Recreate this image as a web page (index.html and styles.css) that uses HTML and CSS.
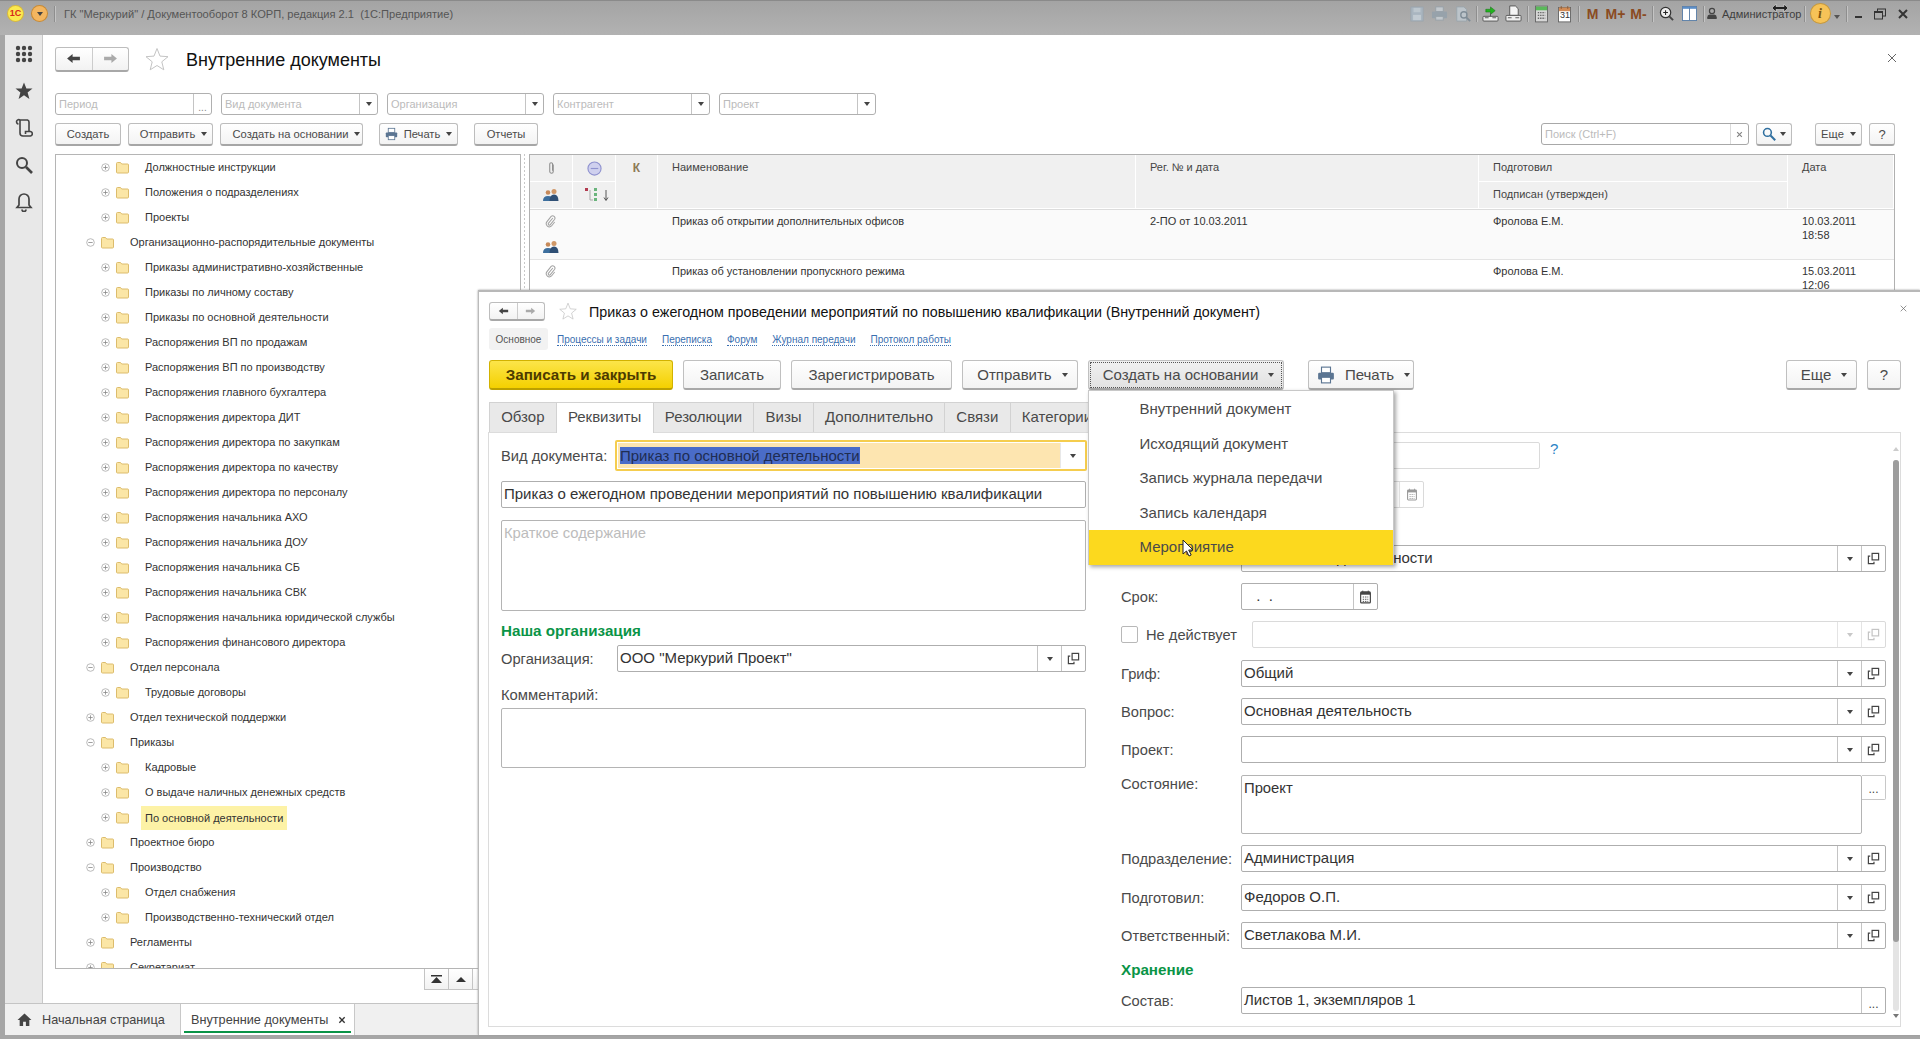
FILE: index.html
```html
<!DOCTYPE html>
<html lang="ru">
<head>
<meta charset="utf-8">
<title>Внутренние документы</title>
<link rel="stylesheet" href="styles.css">
</head>
<body>
<svg class="defs" width="0" height="0">
  <symbol id="arrL" viewBox="0 0 16 12"><path d="M1 6l6-5v3.2h8v3.6H7V11z"/></symbol>
  <symbol id="arrR" viewBox="0 0 16 12"><path d="M15 6L9 1v3.2H1v3.6h8V11z"/></symbol>
  <symbol id="starO" viewBox="0 0 24 24"><path d="M12 1.500l3 7.600 8 .6-6.200 5.100 2 8-6.800-4.300-6.800 4.300 2-8L1 9.700l8-.6z" fill="#fff" stroke="#c4c4c4" stroke-width="1"/></symbol>
  <symbol id="grid" viewBox="0 0 18 18"><g fill="#444"><circle cx="3" cy="3" r="2.200"/><circle cx="9" cy="3" r="2.200"/><circle cx="15" cy="3" r="2.200"/><circle cx="3" cy="9" r="2.200"/><circle cx="9" cy="9" r="2.200"/><circle cx="15" cy="9" r="2.200"/><circle cx="3" cy="15" r="2.200"/><circle cx="9" cy="15" r="2.200"/><circle cx="15" cy="15" r="2.200"/></g></symbol>
  <symbol id="starF" viewBox="0 0 18 18"><path d="M9 .5l2.400 6H17.500l-4.900 4 1.800 6.500L9 13.300 3.600 17l1.800-6.500-4.900-4h6.100z" fill="#444"/></symbol>
  <symbol id="scroll" viewBox="0 0 18 20"><path d="M3.500 6A2.200 2.200 0 1 1 5 2h7.500A2 2 0 0 1 14 4v9.500M5 2.500V15a3 3 0 0 0 3 3h7.500a2.300 2.300 0 0 0 0-4.500H10.500v2.500" fill="none" stroke="#444" stroke-width="1.600"/></symbol>
  <symbol id="search" viewBox="0 0 18 18"><circle cx="7" cy="7" r="5" fill="none" stroke="currentColor" stroke-width="2"/><path d="M11 11l6 6" stroke="currentColor" stroke-width="2.600"/></symbol>
  <symbol id="bell" viewBox="0 0 18 20"><path d="M9 2a5 5 0 0 0-5 5v6l-2 2.500h14L14 13V7a5 5 0 0 0-5-5zM7 17.500a2 2 0 0 0 4 0" fill="none" stroke="#444" stroke-width="1.700"/></symbol>
  <symbol id="folder" viewBox="0 0 13 13"><path d="M.5 2.500q0-1 1-1h3l1.200 1.500h6q.8 0 .8 1v7q0 1-1 1h-10q-1 0-1-1z" fill="#fbe6a6" stroke="#dcbc6c"/></symbol>
  <symbol id="plus" viewBox="0 0 9 9"><circle cx="4.500" cy="4.500" r="3.800" fill="none" stroke="#aaa" stroke-width=".8"/><path d="M2.300 4.500h4.400M4.500 2.300v4.400" stroke="#888" stroke-width=".8"/></symbol>
  <symbol id="minus" viewBox="0 0 9 9"><circle cx="4.500" cy="4.500" r="3.800" fill="none" stroke="#aaa" stroke-width=".8"/><path d="M2.300 4.500h4.400" stroke="#888" stroke-width=".8"/></symbol>
  <symbol id="printer" viewBox="0 0 16 16"><rect x="4" y="1" width="8" height="5" fill="#fff" stroke="#5b7592"/><rect x="1" y="6" width="14" height="6" rx="1" fill="#5b7592"/><rect x="4" y="10" width="8" height="5" fill="#fff" stroke="#5b7592"/></symbol>
  <symbol id="clip" viewBox="0 0 14 16"><path d="M10 3.500L4.500 10a1.500 1.500 0 0 0 2.300 2l5.500-6.800a3 3 0 0 0-4.500-3.800L2.300 8.500a4 4 0 0 0 6 5.200l4-5" fill="none" stroke="#a2a2a2" stroke-width="1.300"/></symbol>
  <symbol id="clipV" viewBox="0 0 10 16"><path d="M7 4v8a2 2 0 0 1-4 0V3.500a1.600 1.600 0 0 1 3.200 0V11" fill="none" stroke="#8e8e8e" stroke-width="1.200"/></symbol>
  <symbol id="people" viewBox="0 0 16 14"><circle cx="5" cy="4.500" r="2.300" fill="#c78a5a"/><path d="M0 13q0-5 5-5t5 5z" fill="#3d6f9e"/><circle cx="11" cy="3.500" r="2.500" fill="#d09868"/><path d="M6.500 13q0-6.500 4.500-6.500t4.500 6.500z" fill="#2f4f75"/></symbol>
  <symbol id="status" viewBox="0 0 16 16"><circle cx="8" cy="8" r="7" fill="#cfd0ee" stroke="#8f92cf" stroke-width="1.200"/><path d="M4 8h8" stroke="#8f92cf" stroke-width="1.200"/></symbol>
  <symbol id="treeico" viewBox="0 0 26 14"><rect x="0" y="0" width="3" height="3" fill="#b23b50"/><rect x="9" y="0" width="3" height="3" fill="#6ab47c"/><rect x="9" y="5" width="3" height="3" fill="#6ab47c"/><rect x="9" y="10" width="3" height="3" fill="#6ab47c"/><path d="M5 2v10h3" fill="none" stroke="#aaa"/><path d="M21 2v10M19 9.500l2 3 2-3" fill="none" stroke="#444" stroke-width=".9"/></symbol>
  <symbol id="copy" viewBox="0 0 14 14"><rect x="5.500" y="1.500" width="7" height="7" fill="none" stroke="currentColor" stroke-width="1.300"/><path d="M3.500 4.500h-2v8h6v-2" fill="none" stroke="currentColor" stroke-width="1.300"/></symbol>
  <symbol id="cal" viewBox="0 0 12 15"><rect x=".7" y="2" width="10.600" height="12" rx="1" fill="#fff" stroke="currentColor" stroke-width="1.300"/><rect x="1" y="2" width="10" height="3" fill="currentColor"/><path d="M3 .5v3M9 .5v3" stroke="currentColor"/><path d="M3 7.500h6M3 10h6M3 12.300h6" stroke="currentColor" stroke-dasharray="1.500 1"/></symbol>
  <symbol id="home" viewBox="0 0 16 14"><path d="M8 .5L.5 7.500h2.300V14h3.700V9.500h3V14h3.700V7.500h2.300z" fill="#444"/></symbol>
  <symbol id="t-save" viewBox="0 0 16 18"><rect x="1" y="1" width="14" height="16" fill="#a9b5bf" stroke="#9aa5ae"/><rect x="4" y="2" width="8" height="5" fill="#bcc6cd"/><rect x="3.500" y="10" width="9" height="6" fill="#c2cbd2"/></symbol>
  <symbol id="t-print" viewBox="0 0 18 18"><rect x="5" y="2" width="8" height="5" fill="#c2c8cd" stroke="#98a1a8"/><rect x="1" y="7" width="16" height="7" rx="1" fill="#97a2ab"/><rect x="5" y="12" width="8" height="4" fill="#c2c8cd" stroke="#98a1a8"/></symbol>
  <symbol id="t-prev" viewBox="0 0 18 18"><path d="M2 1h8l3 3v13H2z" fill="#bcc4ca" stroke="#9aa5ad"/><circle cx="10" cy="10" r="3.500" fill="none" stroke="#7f8c96" stroke-width="1.500"/><path d="M12.500 12.500L17 17" stroke="#7f8c96" stroke-width="2"/></symbol>
  <symbol id="t-in" viewBox="0 0 18 18"><path d="M4 4.500h5V2l5 4-5 4V7.500H4z" fill="#22b21f" stroke="#0e6d12" stroke-width=".5"/><rect x="1" y="12" width="16" height="5" rx="1" fill="#eee" stroke="#555"/><path d="M3 13.500h4M11 13.500h4M9 9v3" stroke="#555"/></symbol>
  <symbol id="t-out" viewBox="0 0 18 18"><path d="M5 1h6l3 3v7H5z" fill="#f4f4f4" stroke="#555"/><rect x="1" y="11" width="16" height="6" rx="1" fill="#eee" stroke="#555"/><path d="M3 13.500h4M11 13.500h4" stroke="#555"/></symbol>
  <symbol id="t-calc" viewBox="0 0 14 18"><rect x=".5" y=".5" width="13" height="17" fill="#d6d6d6" stroke="#666"/><rect x="1" y="1" width="12" height="4" fill="#5ab95a"/><path d="M3 7.500h8M3 10.500h8M3 13.500h8" stroke="#666" stroke-width="1.500" stroke-dasharray="1.500 1"/></symbol>
  <symbol id="t-cal" viewBox="0 0 14 18"><rect x=".5" y="2" width="13" height="15.500" fill="#fff" stroke="#666"/><rect x="1" y="2" width="12" height="4" fill="#d28b55"/><path d="M3.500 .5v3M10.500 .5v3" stroke="#8a5a35"/></symbol>
  <symbol id="t-zoom" viewBox="0 0 16 16"><circle cx="7" cy="7" r="5.500" fill="#eee" stroke="#333" stroke-width="1.300"/><path d="M4.500 7h5M7 4.500v5" stroke="#222" stroke-width="1.100"/><path d="M11 11l4 4" stroke="#444" stroke-width="2"/></symbol>
  <symbol id="t-panel" viewBox="0 0 16 16"><rect x=".5" y=".5" width="15" height="15" fill="#fff" stroke="#5b7fa8"/><rect x="1" y="1" width="14" height="2" fill="#5b8fca"/><path d="M8 2v13" stroke="#5b7fa8"/></symbol>
  <symbol id="t-user" viewBox="0 0 14 14"><circle cx="7" cy="4" r="3" fill="none" stroke="#444" stroke-width="1.400"/><path d="M1.500 13.300v-2q0-2.800 3-3h5q3 .2 3 3v2z" fill="#444"/></symbol>
  <symbol id="t-close" viewBox="0 0 12 12"><path d="M2 2l8 8M10 2l-8 8" stroke="#333" stroke-width="2"/></symbol>
  <symbol id="t-rest" viewBox="0 0 12 12"><rect x="3.500" y="1" width="8" height="7" fill="none" stroke="#333"/><rect x=".5" y="3.500" width="8" height="7.500" fill="#aaa" stroke="#333"/><rect x=".5" y="3.500" width="8" height="1.500" fill="#333"/></symbol>
  <symbol id="x" viewBox="0 0 10 10"><path d="M1 1l8 8M9 1l-8 8" stroke="#666" stroke-width="1"/></symbol>
</svg>

<div class="app">
  <header class="titlebar">
    <div class="tb-left">
      <span class="logo">1С</span>
      <span class="menu-ball"><i class="caret dark"></i></span>
      <span class="tb-sep"></span>
      <span class="tb-title">ГК "Меркурий" / Документооборот 8 КОРП, редакция 2.1&nbsp; (1С:Предприятие)</span>
    </div>
    <div class="tb-right">
      <span class="ti"><svg width="14" height="16"><use href="#t-save"/></svg></span>
      <span class="ti"><svg width="17" height="17"><use href="#t-print"/></svg></span>
      <span class="ti"><svg width="16" height="16"><use href="#t-prev"/></svg></span>
      <span class="tb-sep"></span>
      <span class="ti"><svg width="17" height="17"><use href="#t-in"/></svg></span>
      <span class="ti"><svg width="17" height="17"><use href="#t-out"/></svg></span>
      <span class="tb-sep"></span>
      <span class="ti"><svg width="13" height="18"><use href="#t-calc"/></svg></span>
      <span class="ti cal31"><svg width="13" height="18"><use href="#t-cal"/></svg><b>31</b></span>
      <span class="tb-sep"></span>
      <span class="ti mem">M</span>
      <span class="ti mem">M+</span>
      <span class="ti mem">M-</span>
      <span class="tb-sep"></span>
      <span class="ti"><svg width="15" height="15"><use href="#t-zoom"/></svg></span>
      <span class="ti"><svg width="15" height="15"><use href="#t-panel"/></svg></span>
      <span class="tb-sep"></span>
      <span class="ti-user"><svg width="12" height="13"><use href="#t-user"/></svg><span>Администратор</span></span>
      <span class="tb-sep"></span>
      <span class="ti info">i</span>
      <span class="ti-chev"><i class="caret"></i></span>
      <span class="tb-sep"></span>
      <span class="ti tmin"><i class="min"></i></span>
      <span class="ti"><svg width="12" height="12"><use href="#t-rest"/></svg></span>
      <span class="ti"><svg width="12" height="12"><use href="#t-close"/></svg></span>
    </div>
  </header>

  <div class="workspace">
    <div class="ws-main">
      <nav class="sidebar">
        <span class="si"><svg width="18" height="18"><use href="#grid"/></svg></span>
        <span class="si"><svg width="18" height="18"><use href="#starF"/></svg></span>
        <span class="si"><svg width="18" height="20"><use href="#scroll"/></svg></span>
        <span class="si srch"><svg width="18" height="18"><use href="#search"/></svg></span>
        <span class="si"><svg width="18" height="20"><use href="#bell"/></svg></span>
      </nav>

      <main class="content">
        <div class="page-head">
          <div class="nav"><span class="nav-b"><svg width="15" height="11"><use href="#arrL"/></svg></span><span class="nav-b off"><svg width="15" height="11"><use href="#arrR"/></svg></span></div>
          <svg class="fav" width="24" height="24"><use href="#starO"/></svg>
          <h1 class="page-title">Внутренние документы</h1>
          <span class="page-x"><svg width="10" height="10"><use href="#x"/></svg></span>
        </div>

        <div class="filters">
          <div class="ff"><span class="ff-v">Период</span><span class="ff-b dots">...</span></div>
          <div class="ff"><span class="ff-v">Вид документа</span><span class="ff-b"><i class="caret dark"></i></span></div>
          <div class="ff"><span class="ff-v">Организация</span><span class="ff-b"><i class="caret dark"></i></span></div>
          <div class="ff"><span class="ff-v">Контрагент</span><span class="ff-b"><i class="caret dark"></i></span></div>
          <div class="ff"><span class="ff-v">Проект</span><span class="ff-b"><i class="caret dark"></i></span></div>
        </div>

        <div class="toolbar">
          <button class="btn w66">Создать</button>
          <button class="btn w85 shift">Отправить<i class="caret dark"></i></button>
          <button class="btn w143 shift2">Создать на основании<i class="caret dark"></i></button>
          <button class="btn w79 ml9"><svg width="13" height="14"><use href="#printer"/></svg>Печать<i class="caret dark"></i></button>
          <button class="btn w64 ml9">Отчеты</button>
          <div class="searchbox"><span class="sb-v">Поиск (Ctrl+F)</span><span class="sb-x"><svg width="7" height="7"><use href="#t-close"/></svg></span></div>
          <button class="btn w36 srchb"><svg width="14" height="14"><use href="#search"/></svg><i class="caret dark"></i></button>
          <button class="btn w47 ml23">Еще<i class="caret dark"></i></button>
          <button class="btn w26">?</button>
        </div>

        <div class="split">
          <div class="tree-col">
            <div class="tree">
              <div class="tr l2"><svg width="9" height="9"><use href="#plus"/></svg><svg width="13" height="13"><use href="#folder"/></svg><span>Должностные инструкции</span></div>
              <div class="tr l2"><svg width="9" height="9"><use href="#plus"/></svg><svg width="13" height="13"><use href="#folder"/></svg><span>Положения о подразделениях</span></div>
              <div class="tr l2"><svg width="9" height="9"><use href="#plus"/></svg><svg width="13" height="13"><use href="#folder"/></svg><span>Проекты</span></div>
              <div class="tr l1"><svg width="9" height="9"><use href="#minus"/></svg><svg width="13" height="13"><use href="#folder"/></svg><span>Организационно-распорядительные документы</span></div>
              <div class="tr l2"><svg width="9" height="9"><use href="#plus"/></svg><svg width="13" height="13"><use href="#folder"/></svg><span>Приказы административно-хозяйственные</span></div>
              <div class="tr l2"><svg width="9" height="9"><use href="#plus"/></svg><svg width="13" height="13"><use href="#folder"/></svg><span>Приказы по личному составу</span></div>
              <div class="tr l2"><svg width="9" height="9"><use href="#plus"/></svg><svg width="13" height="13"><use href="#folder"/></svg><span>Приказы по основной деятельности</span></div>
              <div class="tr l2"><svg width="9" height="9"><use href="#plus"/></svg><svg width="13" height="13"><use href="#folder"/></svg><span>Распоряжения ВП по продажам</span></div>
              <div class="tr l2"><svg width="9" height="9"><use href="#plus"/></svg><svg width="13" height="13"><use href="#folder"/></svg><span>Распоряжения ВП по производству</span></div>
              <div class="tr l2"><svg width="9" height="9"><use href="#plus"/></svg><svg width="13" height="13"><use href="#folder"/></svg><span>Распоряжения главного бухгалтера</span></div>
              <div class="tr l2"><svg width="9" height="9"><use href="#plus"/></svg><svg width="13" height="13"><use href="#folder"/></svg><span>Распоряжения директора ДИТ</span></div>
              <div class="tr l2"><svg width="9" height="9"><use href="#plus"/></svg><svg width="13" height="13"><use href="#folder"/></svg><span>Распоряжения директора по закупкам</span></div>
              <div class="tr l2"><svg width="9" height="9"><use href="#plus"/></svg><svg width="13" height="13"><use href="#folder"/></svg><span>Распоряжения директора по качеству</span></div>
              <div class="tr l2"><svg width="9" height="9"><use href="#plus"/></svg><svg width="13" height="13"><use href="#folder"/></svg><span>Распоряжения директора по персоналу</span></div>
              <div class="tr l2"><svg width="9" height="9"><use href="#plus"/></svg><svg width="13" height="13"><use href="#folder"/></svg><span>Распоряжения начальника АХО</span></div>
              <div class="tr l2"><svg width="9" height="9"><use href="#plus"/></svg><svg width="13" height="13"><use href="#folder"/></svg><span>Распоряжения начальника ДОУ</span></div>
              <div class="tr l2"><svg width="9" height="9"><use href="#plus"/></svg><svg width="13" height="13"><use href="#folder"/></svg><span>Распоряжения начальника СБ</span></div>
              <div class="tr l2"><svg width="9" height="9"><use href="#plus"/></svg><svg width="13" height="13"><use href="#folder"/></svg><span>Распоряжения начальника СВК</span></div>
              <div class="tr l2"><svg width="9" height="9"><use href="#plus"/></svg><svg width="13" height="13"><use href="#folder"/></svg><span>Распоряжения начальника юридической службы</span></div>
              <div class="tr l2"><svg width="9" height="9"><use href="#plus"/></svg><svg width="13" height="13"><use href="#folder"/></svg><span>Распоряжения финансового директора</span></div>
              <div class="tr l1"><svg width="9" height="9"><use href="#minus"/></svg><svg width="13" height="13"><use href="#folder"/></svg><span>Отдел персонала</span></div>
              <div class="tr l2"><svg width="9" height="9"><use href="#plus"/></svg><svg width="13" height="13"><use href="#folder"/></svg><span>Трудовые договоры</span></div>
              <div class="tr l1"><svg width="9" height="9"><use href="#plus"/></svg><svg width="13" height="13"><use href="#folder"/></svg><span>Отдел технической поддержки</span></div>
              <div class="tr l1"><svg width="9" height="9"><use href="#minus"/></svg><svg width="13" height="13"><use href="#folder"/></svg><span>Приказы</span></div>
              <div class="tr l2"><svg width="9" height="9"><use href="#plus"/></svg><svg width="13" height="13"><use href="#folder"/></svg><span>Кадровые</span></div>
              <div class="tr l2"><svg width="9" height="9"><use href="#plus"/></svg><svg width="13" height="13"><use href="#folder"/></svg><span>О выдаче наличных денежных средств</span></div>
              <div class="tr l2 sel"><svg width="9" height="9"><use href="#plus"/></svg><svg width="13" height="13"><use href="#folder"/></svg><span>По основной деятельности</span></div>
              <div class="tr l1"><svg width="9" height="9"><use href="#plus"/></svg><svg width="13" height="13"><use href="#folder"/></svg><span>Проектное бюро</span></div>
              <div class="tr l1"><svg width="9" height="9"><use href="#minus"/></svg><svg width="13" height="13"><use href="#folder"/></svg><span>Производство</span></div>
              <div class="tr l2"><svg width="9" height="9"><use href="#plus"/></svg><svg width="13" height="13"><use href="#folder"/></svg><span>Отдел снабжения</span></div>
              <div class="tr l2"><svg width="9" height="9"><use href="#plus"/></svg><svg width="13" height="13"><use href="#folder"/></svg><span>Производственно-технический отдел</span></div>
              <div class="tr l1"><svg width="9" height="9"><use href="#plus"/></svg><svg width="13" height="13"><use href="#folder"/></svg><span>Регламенты</span></div>
              <div class="tr l1"><svg width="9" height="9"><use href="#plus"/></svg><svg width="13" height="13"><use href="#folder"/></svg><span>Секретариат</span></div>
            </div>
            <div class="tree-scroll">
              <span class="ts"><svg width="11" height="8" viewBox="0 0 11 8"><path d="M0 0h11v1.500H0zM5.500 2L11 8H0z" fill="#333"/></svg></span><span class="ts"><i class="up"></i></span><span class="ts"></span><span class="ts"></span>
            </div>
          </div>
          <div class="splitter"></div>
          <div class="table">
            <div class="thead">
              <div class="th c"><svg width="9" height="14"><use href="#clipV"/></svg></div>
              <div class="th c"><svg width="15" height="15"><use href="#status"/></svg></div>
              <div class="th c rs k">К</div>
              <div class="th rs">Наименование</div>
              <div class="th rs reg">Рег. № и дата</div>
              <div class="th">Подготовил</div>
              <div class="th rs">Дата</div>
              <div class="th c"><svg width="16" height="14"><use href="#people"/></svg></div>
              <div class="th c"><svg class="tree-ico" width="26" height="14"><use href="#treeico"/></svg></div>
              <div class="th">Подписан (утвержден)</div>
            </div>
            <div class="trow alt">
              <div class="td ico"><svg width="11" height="13"><use href="#clip"/></svg><svg class="ppl" width="16" height="14"><use href="#people"/></svg></div>
              <div class="td"></div><div class="td"></div>
              <div class="td">Приказ об открытии дополнительных офисов</div>
              <div class="td reg">2-ПО от 10.03.2011</div>
              <div class="td">Фролова Е.М.</div>
              <div class="td">10.03.2011<br>18:58</div>
            </div>
            <div class="trow">
              <div class="td ico"><svg width="11" height="13"><use href="#clip"/></svg></div>
              <div class="td"></div><div class="td"></div>
              <div class="td">Приказ об установлении пропускного режима</div>
              <div class="td reg"></div>
              <div class="td">Фролова Е.М.</div>
              <div class="td">15.03.2011<br>12:06</div>
            </div>
          </div>
        </div>
      </main>
    </div>
    <footer class="tabbar">
      <div class="wtab home"><svg width="15" height="13"><use href="#home"/></svg>Начальная страница</div>
      <div class="wtab cur">Внутренние документы<svg class="wtab-x" width="8" height="8"><use href="#t-close"/></svg></div>
    </footer>
  </div>
</div>

<section class="dialog">
  <div class="d-head">
    <div class="nav sm"><span class="nav-b"><svg width="11" height="8"><use href="#arrL"/></svg></span><span class="nav-b off"><svg width="11" height="8"><use href="#arrR"/></svg></span></div>
    <svg class="fav" width="18" height="18"><use href="#starO"/></svg>
    <h2 class="d-title">Приказ о ежегодном проведении мероприятий по повышению квалификации (Внутренний документ)</h2>
    <span class="d-x"><svg width="7" height="7"><use href="#x"/></svg></span>
  </div>
  <div class="d-links">
    <span class="lnk-cur">Основное</span>
    <a class="lnk">Процессы и задачи</a>
    <a class="lnk">Переписка</a>
    <a class="lnk">Форум</a>
    <a class="lnk">Журнал передачи</a>
    <a class="lnk">Протокол работы</a>
  </div>
  <div class="d-cmd">
    <button class="lbtn primary">Записать и закрыть</button>
    <button class="lbtn w98">Записать</button>
    <button class="lbtn w161">Зарегистрировать</button>
    <button class="lbtn w116 wide">Отправить<i class="caret dark"></i></button>
    <button class="lbtn w196 focus wide">Создать на основании<i class="caret dark"></i></button>
    <button class="lbtn w106 ml14 wide"><svg width="18" height="18"><use href="#printer"/></svg>Печать<i class="caret dark"></i></button>
    <button class="lbtn w71 push wide">Еще<i class="caret dark"></i></button>
    <button class="lbtn w34">?</button>
  </div>
  <div class="d-tabs">
    <span class="dt">Обзор</span><span class="dt on">Реквизиты</span><span class="dt">Резолюции</span><span class="dt">Визы</span><span class="dt">Дополнительно</span><span class="dt">Связи</span><span class="dt">Категории</span>
  </div>
  <div class="d-panel">
    <div class="col-l">
      <div class="row r31">
        <span class="lab w114">Вид документа:</span>
        <div class="fld active"><span class="val"><span class="hl">Приказ по основной деятельности</span></span><span class="fb"><i class="caret dark"></i></span></div>
      </div>
      <div class="fld mt10 w585"><span class="val">Приказ о ежегодном проведении мероприятий по повышению квалификации</span></div>
      <div class="area mt12 w585 h91"><span class="ph">Краткое содержание</span></div>
      <div class="sect mt10">Наша организация</div>
      <div class="row mt4 w585">
        <span class="lab w116">Организация:</span>
        <div class="fld"><span class="val">ООО "Меркурий Проект"</span><span class="fb"><i class="caret dark"></i></span><span class="fb"><svg width="13" height="13"><use href="#copy"/></svg></span></div>
      </div>
      <div class="lab-block mt14">Комментарий:</div>
      <div class="area mt2 w585 h60"></div>
    </div>

    <div class="col-r">
      <div class="row first">
        <span class="lab w120"></span>
        <div class="fld w299 soft"><span class="val"></span></div>
        <span class="q">?</span>
      </div>
      <div class="row mt12">
        <span class="lab w120"></span>
        <div class="fld w183 soft"><span class="val"></span><span class="fb"><svg class="dim" width="10" height="13"><use href="#cal"/></svg></span></div>
      </div>
      <div class="row mt37">
        <span class="lab w120"></span>
        <div class="fld"><span class="val">По основной деятельности</span><span class="fb"><i class="caret dark"></i></span><span class="fb"><svg width="13" height="13"><use href="#copy"/></svg></span></div>
      </div>
      <div class="row mt11">
        <span class="lab w120">Срок:</span>
        <div class="fld w137"><span class="val dots-date">&nbsp;.&nbsp;&nbsp;.</span><span class="fb"><svg width="11" height="14"><use href="#cal"/></svg></span></div>
      </div>
      <div class="row mt11">
        <label class="chk"><i class="box"></i>Не действует</label>
        <div class="fld soft"><span class="val"></span><span class="fb"><i class="caret pale"></i></span><span class="fb pale-ico"><svg width="13" height="13"><use href="#copy"/></svg></span></div>
      </div>
      <div class="row mt12">
        <span class="lab w120">Гриф:</span>
        <div class="fld"><span class="val">Общий</span><span class="fb"><i class="caret dark"></i></span><span class="fb"><svg width="13" height="13"><use href="#copy"/></svg></span></div>
      </div>
      <div class="row mt11">
        <span class="lab w120">Вопрос:</span>
        <div class="fld"><span class="val">Основная деятельность</span><span class="fb"><i class="caret dark"></i></span><span class="fb"><svg width="13" height="13"><use href="#copy"/></svg></span></div>
      </div>
      <div class="row mt11">
        <span class="lab w120">Проект:</span>
        <div class="fld"><span class="val"></span><span class="fb"><i class="caret dark"></i></span><span class="fb"><svg width="13" height="13"><use href="#copy"/></svg></span></div>
      </div>
      <div class="row top mt12">
        <span class="lab w120">Состояние:</span>
        <div class="area grow h59"><span class="val-a">Проект</span></div>
        <span class="more">...</span>
      </div>
      <div class="row mt11">
        <span class="lab w120">Подразделение:</span>
        <div class="fld"><span class="val">Администрация</span><span class="fb"><i class="caret dark"></i></span><span class="fb"><svg width="13" height="13"><use href="#copy"/></svg></span></div>
      </div>
      <div class="row mt12">
        <span class="lab w120">Подготовил:</span>
        <div class="fld"><span class="val">Федоров О.П.</span><span class="fb"><i class="caret dark"></i></span><span class="fb"><svg width="13" height="13"><use href="#copy"/></svg></span></div>
      </div>
      <div class="row mt11">
        <span class="lab w120">Ответственный:</span>
        <div class="fld"><span class="val">Светлакова М.И.</span><span class="fb"><i class="caret dark"></i></span><span class="fb"><svg width="13" height="13"><use href="#copy"/></svg></span></div>
      </div>
      <div class="sect mt11">Хранение</div>
      <div class="row mt7">
        <span class="lab w120">Состав:</span>
        <div class="fld"><span class="val">Листов 1, экземпляров 1</span><span class="fb dots">...</span></div>
      </div>
    </div>

    <div class="vscroll"><i class="vs-up"></i><div class="vs-track"><div class="vs-thumb"></div></div><i class="vs-dn"></i></div>
  </div>
</section>

<div class="popup">
  <div class="pi">Внутренний документ</div>
  <div class="pi">Исходящий документ</div>
  <div class="pi">Запись журнала передачи</div>
  <div class="pi">Запись календаря</div>
  <div class="pi cur">Мероприятие</div>
</div>

<svg class="pointer" width="12" height="18" viewBox="0 0 12 18"><path d="M1 1v14l3.500-3 2.500 5 2.200-1-2.500-5H11z" fill="#fff" stroke="#222"/></svg>
<svg class="resize" width="18" height="10" viewBox="0 0 18 10"><path d="M1 5l4-4v2.500h8V1l4 4-4 4V6.500H5V9z" fill="#222" stroke="#ddd" stroke-width=".6"/></svg>
</body>
</html>
```

FILE: styles.css
```css
* { box-sizing: border-box; }
html, body { margin: 0; height: 100%; }
body { position: relative; width: 1920px; height: 1039px; overflow: hidden; font-family: "Liberation Sans", Arial, sans-serif; color: #333; background: #a6a6a6; }
.defs { position: absolute; }
svg { display: block; flex: none; }
i { display: block; font-style: normal; }
h1, h2 { margin: 0; font-weight: 400; }
button { font-family: inherit; color: #4a4a4a; }

.app { display: flex; flex-direction: column; height: 1039px; }

/* title bar */
.titlebar { height: 35px; flex: none; display: flex; justify-content: space-between; background: linear-gradient(#a4a4a4, #b2b2b2); border-top: 1px solid #8a8a8a; }
.tb-left { display: flex; align-items: center; padding: 0 0 9px 8px; }
.logo { width: 15px; height: 15px; border-radius: 50%; margin-right: 9px; background: #fbe94f; color: #d62a1c; font-size: 9px; font-weight: 700; line-height: 15px; text-align: center; box-shadow: 0 0 0 1px #d8b93b; }
.menu-ball { width: 15px; height: 15px; border-radius: 50%; background: #f3b660; box-shadow: 0 0 0 1px #c98a32; display: flex; align-items: center; justify-content: center; }
.tb-sep { width: 1px; height: 16px; background: #8e8e8e; margin: 0 2px; box-shadow: 1px 0 0 #c4c4c4; }
.tb-left .tb-sep { margin: 0 9px 0 7px; }
.tb-title { font-size: 11.100px; color: #555; }
.tb-right { display: flex; align-items: center; padding: 0 5.500px 9px 0; }
.ti { width: 23px; height: 20px; display: flex; align-items: center; justify-content: center; position: relative; }
.ti.tmin { width: 20px; }
.mem { font-size: 14px; font-weight: 700; color: #8a4b22; }
.cal31 b { position: absolute; left: 7px; top: 6px; font-size: 9px; font-weight: 400; color: #333; }
.ti-user { display: flex; align-items: center; gap: 4px; font-size: 11px; color: #3f3f3f; width: 95.500px; white-space: nowrap; }
.info { width: 19px; height: 19px; margin-left: 4px; border-radius: 50%; background: #f6c358; color: #7a5410; font: italic 700 14px "Liberation Serif", serif; box-shadow: 0 0 0 1px #c79a3e; }
.ti-chev { width: 14px; display: flex; justify-content: center; padding-top: 6px; }
.min { width: 7px; height: 2px; background: #333; margin-top: 6px; }

.caret { width: 0; height: 0; border-left: 3px solid transparent; border-right: 3px solid transparent; border-top: 4px solid #555; display: inline-block; }
.caret.dark { border-top-color: #444; }
.caret.pale { border-top-color: #c8c8c8; }

/* workspace */
.workspace { flex: 1; min-height: 0; margin: 0 0 4px 5px; display: flex; flex-direction: column; }
.ws-main { flex: 1; min-height: 0; display: flex; }
.sidebar { width: 38px; flex: none; background: #e8e8e8; border-right: 1px solid #c8c8c8; display: flex; flex-direction: column; }
.si { height: 37px; flex: none; display: flex; align-items: center; justify-content: center; }
.srch { color: #444; }
.content { flex: 1; min-width: 0; background: #fff; padding: 12px 25px 0 12px; display: flex; flex-direction: column; }

.page-head { height: 24px; flex: none; display: flex; align-items: center; position: relative; }
.nav { display: flex; width: 74px; height: 25px; border: 1px solid #bdbdbd; border-bottom: 2px solid #a8a8a8; border-radius: 3px; background: linear-gradient(#fff, #f2f2f2); }
.nav-b { flex: 1; display: flex; align-items: center; justify-content: center; color: #444; fill: #444; }
.nav-b + .nav-b { border-left: 1px solid #ccc; }
.nav-b.off { fill: #aaa; }
.fav { margin-left: 16px; }
.page-title { margin: 2px 0 0 17px; font-size: 18px; color: #111; }
.page-x { position: absolute; right: -2px; top: 6px; }

.filters { display: flex; gap: 9px; margin-top: 22px; height: 22px; flex: none; }
.ff { width: 157px; display: flex; border: 1px solid #b0b0b0; border-radius: 3px; background: #fff; }
.ff-v { flex: 1; padding-left: 3px; font-size: 11px; line-height: 20px; color: #bbb; }
.ff-b { width: 18px; border-left: 1px solid #c4c4c4; display: flex; align-items: center; justify-content: center; }
.ff-b.dots { font-size: 10px; color: #888; padding-top: 6px; }

.toolbar { display: flex; gap: 7px; margin-top: 8px; height: 23px; flex: none; align-items: stretch; }
.btn { height: 23px; padding: 0; font-size: 11.200px; border: 1px solid #bdbdbd; border-bottom: 2px solid #a6a6a6; border-radius: 3px; background: linear-gradient(#fff, #f3f3f3); display: flex; align-items: center; justify-content: center; gap: 6px; }
.btn.shift { padding-left: 6px; }
.btn.shift2 { padding-left: 9px; gap: 5px; }
.w66 { width: 66px; } .w85 { width: 85px; } .w143 { width: 143px; } .w79 { width: 79px; } .w64 { width: 64px; } .w36 { width: 36px; } .w47 { width: 47px; } .w26 { width: 26px; font-size: 13px; }
.ml9 { margin-left: 9px; }
.ml23 { margin-left: 16px; }
.searchbox { margin-left: auto; width: 208px; height: 22px; display: flex; border: 1px solid #a8a8a8; border-radius: 3px; }
.sb-v { flex: 1; padding-left: 3px; font-size: 11px; line-height: 20px; color: #bbb; }
.sb-x { width: 18px; border-left: 1px solid #c4c4c4; display: flex; align-items: center; justify-content: center; opacity: .6; }
.srchb { color: #2f6f9f; gap: 4px; }

.split { flex: 1; min-height: 0; display: flex; margin-top: 8px; }
.tree-col { width: 466px; flex: none; display: flex; flex-direction: column; }
.tree { height: 815px; flex: none; overflow: hidden; border: 1px solid #b5b5b5; background: #fff; }
.tr { height: 25px; display: flex; align-items: center; font-size: 11px; color: #333; white-space: nowrap; }
.tr.l1 { padding-left: 30px; }
.tr.l2 { padding-left: 45px; }
.tr svg + svg { margin-left: 6px; }
.tr span { margin: -1px 0 0 16px; }
.tr.sel span { margin: 0 0 0 12px; padding: 0 4px; line-height: 24px; background: #fdf2a6; }
.tree-scroll { display: flex; justify-content: flex-end; height: 21px; flex: none; }
.ts { width: 25px; border: 1px solid #c4c4c4; border-top: 0; margin-left: -1px; display: flex; align-items: center; justify-content: center; background: linear-gradient(#fff, #f2f2f2); }
.up { border-left: 5px solid transparent; border-right: 5px solid transparent; border-bottom: 5px solid #333; }
.splitter { width: 8px; flex: none; background-image: linear-gradient(#c8c8c8 50%, transparent 50%); background-size: 1px 4px; background-repeat: repeat-y; background-position: 3px 0; }

.table { flex: 1; min-width: 0; border: 1px solid #b0b0b0; border-bottom: 0; overflow: hidden; font-size: 11px; }
.thead, .trow { display: grid; grid-template-columns: 43px 43px 42px 478px 343px 309px 1fr; }
.thead { grid-template-rows: 27px 27px; background: #f0f0f0; border-bottom: 1px solid #dcdcdc; }
.th { padding: 6px 0 0 14px; color: #444; border-right: 1px solid #fff; border-bottom: 1px solid #fff; height: 100%; }
.th.c { padding: 0; display: flex; align-items: center; justify-content: center; }
.tree-ico { margin-left: 7px; }
.th.rs { grid-row: span 2; }
.th.k { align-items: flex-start; padding-top: 6px; font-weight: 700; font-size: 12px; color: #8d7a55; }
.th.reg, .td.reg { padding-left: 14px; }
.trow { height: 50px; border-bottom: 1px solid #e4e4e4; color: #333; line-height: 14px; }
.trow.alt { background: #fafafa; }
.td { padding: 4px 0 0 14px; }
.td.ico { padding: 5px 0 0 15px; }
.ppl { margin: 12px 0 0 -2px; }

/* bottom tabs */
.tabbar { height: 32px; flex: none; display: flex; background: #f0f0f0; border-top: 1px solid #c4c4c4; font-size: 12.700px; color: #444; white-space: nowrap; }
.wtab { display: flex; align-items: center; border-right: 1px solid #c8c8c8; }
.wtab.home { width: 176px; padding-left: 12px; gap: 10px; }
.wtab.cur { width: 174px; padding-left: 10px; gap: 9px; background: #fff; position: relative; }
.wtab.cur::after { content: ""; position: absolute; left: 3px; right: 3px; bottom: 2px; height: 2px; background: #0a9447; }

/* dialog */
.dialog { position: absolute; left: 478px; top: 290px; right: 0; bottom: 4px; background: #fff; border-top: 2px solid #b8b8b8; border-left: 1px solid #bbb; padding: 10px 19px 0 9px; display: flex; flex-direction: column; box-shadow: 0 0 2px #999; }
.d-head { height: 18px; flex: none; display: flex; align-items: center; margin-left: 1px; position: relative; }
.nav.sm { width: 56px; height: 19px; }
.d-head .fav { margin-left: 14px; }
.d-title { margin: 2px 0 0 12px; font-size: 14.300px; font-weight: 400; color: #111; white-space: nowrap; }
.d-x { position: absolute; right: -6px; top: 3px; }
.d-links { height: 22px; flex: none; margin: 8px 0 0 1px; display: flex; align-items: center; gap: 15px; font-size: 10px; }
.lnk-cur { width: 59px; height: 22px; margin-right: -6px; line-height: 24px; text-align: center; background: #f2f2f2; border-radius: 3px; color: #555; }
.lnk { margin-top: 2px; color: #3a6fb0; border-bottom: 1px dotted #3a6fb0; }
.d-cmd { height: 30px; flex: none; margin: 10px 0 0 1px; display: flex; gap: 10px; }
.lbtn { height: 30px; padding: 0; font-size: 15px; border: 1px solid #c0c0c0; border-bottom: 2px solid #a8a8a8; border-radius: 3px; background: linear-gradient(#fff, #f3f3f3); display: flex; align-items: center; justify-content: center; gap: 8px; }
.lbtn.wide { padding-left: 5px; gap: 10px; }
.primary { width: 184px; background: linear-gradient(#fce54a, #f4d000); border-color: #d2b200; border-bottom-color: #bca000; color: #4d3b00; font-weight: 700; font-size: 15.200px; }
.w98 { width: 98px; } .w161 { width: 161px; } .w116 { width: 116px; } .w196 { width: 196px; } .w106 { width: 106px; } .w71 { width: 71px; } .w34 { width: 34px; }
.focus { background: linear-gradient(#f0f0f0, #e2e2e2); outline: 1px dotted #555; outline-offset: -3px; }
.ml14 { margin-left: 14px; }
.push { margin-left: auto; }
.d-tabs { height: 30px; flex: none; margin: 12px 0 0 1px; display: flex; font-size: 15px; position: relative; }
.dt { padding: 0 11.200px; line-height: 28px; border: 1px solid #d2d2d2; border-bottom: 0; margin-right: -1px; background: #e9e9e9; color: #4a4a4a; white-space: nowrap; }
.dt.on { background: #fff; position: relative; height: 31px; }
.d-panel { flex: 1; min-height: 0; margin-bottom: 8px; border: 1px solid #dcdcdc; padding: 7px 5px 0 12px; display: flex; }
.col-l { width: 586px; flex: none; display: flex; flex-direction: column; }
.col-r { width: 765px; flex: none; margin-left: 34px; display: flex; flex-direction: column; }
.row { display: flex; align-items: center; height: 27px; flex: none; }
.row.top { align-items: flex-start; height: 59px; }
.row.r31 { height: 31px; }
.row.first { margin-top: 2px; }
.lab { flex: none; font-size: 14.700px; color: #4a4a4a; white-space: nowrap; }
.row.top .lab { padding-top: 1px; }
.w114 { width: 114px; } .w116 { width: 116px; } .w120 { width: 120px; }
.lab-block { height: 20px; flex: none; font-size: 14.800px; line-height: 18px; color: #4a4a4a; }
.fld { flex: 1; height: 27px; display: flex; border: 1px solid #aeaeae; border-radius: 2px; background: #fff; min-width: 0; }
.fld.w585 { flex: none; }
.w585 { width: 585px; }
.val { flex: 1; min-width: 0; padding-left: 2px; font-size: 15px; line-height: 24px; color: #333; white-space: nowrap; overflow: hidden; }
.fb { width: 24px; flex: none; border-left: 1px solid #c4c4c4; display: flex; align-items: center; justify-content: center; color: #444; }
.fb.dots { padding-top: 6px; font-size: 12px; }
.fb.pale-ico { color: #c4c4c4; border-left-color: #e4e4e4; }
.fld.soft { border-color: #dadada; }
.fld.soft .fb { border-left-color: #e4e4e4; }
.dim { color: #999; }
.fld.active { height: 31px; border: 2px solid #f5cd4e; background: #fff; padding: 1px; }
.fld.active .val { background: #fde5b0; padding-left: 2px; line-height: 25px; }
.fld.active .fb { border-left: 1px solid #e8e8e8; }
.hl { background: #4a6cc8; color: #1f2d52; }
.area { border: 1px solid #b4b4b4; border-radius: 2px; background: #fff; flex: none; padding: 4px 2px; font-size: 14.800px; }
.h91 { height: 91px; } .h60 { height: 60px; } .h59 { height: 59px; }
.area.grow { flex: 1; min-width: 0; }
.ph { color: #bcbcbc; }
.val-a { color: #333; }
.sect { height: 20px; flex: none; font-size: 15.200px; font-weight: 700; line-height: 20px; color: #0a9447; }
.more { width: 24px; height: 25px; flex: none; border: 1px solid #c8c8c8; border-left: 0; border-radius: 0 2px 2px 0; text-align: center; font-size: 12px; padding-top: 6px; color: #444; }
.q { margin: -14px 0 0 10px; font-size: 15px; color: #2a83c6; }
.w299 { flex: none; width: 299px; }
.w183 { flex: none; width: 183px; }
.w137 { flex: none; width: 137px; }
.dots-date { padding-left: 10px; }
.chk { width: 131px; flex: none; display: flex; align-items: center; gap: 8px; font-size: 14.700px; color: #4a4a4a; }
.box { width: 17px; height: 17px; border: 1px solid #b8b8b8; border-radius: 2px; }
.mt2 { margin-top: 2px; } .mt4 { margin-top: 4px; } .mt7 { margin-top: 7px; } .mt10 { margin-top: 10px; } .mt11 { margin-top: 11px; } .mt12 { margin-top: 12px; } .mt14 { margin-top: 14px; } .mt37 { margin-top: 37px; }
.vscroll { width: 8px; flex: none; margin: 7px 0 8px 6px; display: flex; flex-direction: column; align-items: center; }
.vs-up { border-left: 3px solid transparent; border-right: 3px solid transparent; border-bottom: 4px solid #ccc; }
.vs-dn { border-left: 3px solid transparent; border-right: 3px solid transparent; border-top: 4px solid #777; }
.vs-track { flex: 1; width: 6px; margin: 9px 0 3px; background: #e4e4e4; border-radius: 3px; }
.vs-thumb { height: 482px; background: #9d9d9d; border-radius: 3px; }

/* popup menu */
.popup { position: absolute; left: 1088px; top: 390px; width: 306px; height: 175px; background: #fff; border: 1px solid #c8c8c8; box-shadow: 2px 2px 4px rgba(0,0,0,.35); padding-top: 1px; display: flex; flex-direction: column; }
.pi { height: 34.500px; flex: none; padding-left: 50.500px; font-size: 15px; line-height: 33px; color: #4a4a4a; }
.pi.cur { background: #fcd91e; }

.pointer { position: absolute; left: 1182px; top: 539px; }
.resize { position: absolute; left: 1771px; top: 3px; }
```
